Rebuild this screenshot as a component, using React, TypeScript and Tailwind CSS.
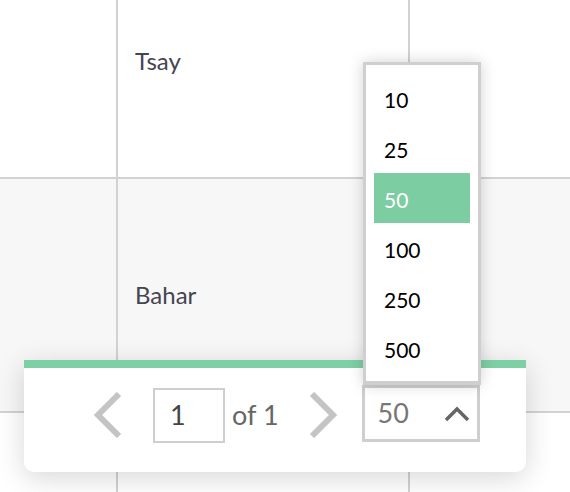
const rows = [
  { name: "Tsay", bg: "bg-white" },
  { name: "Bahar", bg: "bg-[#f7f7f7]" },
  { name: "", bg: "bg-white" },
];

const options = ["10", "25", "50", "100", "250", "500"];

const Chevron = ({ dir }: { dir: "left" | "right" }) => (
  <svg width="30" height="46" viewBox="0 0 30 46" className="block">
    <polyline
      points={dir === "left" ? "26,2 5,23 26,44" : "4,2 25,23 4,44"}
      fill="none"
      stroke="#c4c4c4"
      strokeWidth="6"
    />
  </svg>
);

const App = (): JSX.Element => {
  return (
    <div className="relative w-[570px] h-[492px] overflow-hidden bg-white font-['Lato','Liberation_Sans',sans-serif]">
      {/* table rows */}
      <div className="-mt-[55px] flex flex-col">
        {rows.map((r, i) => (
          <div key={i} className={`flex h-[234px] border-b-2 border-[#d2d2d2] ${r.bg}`}>
            <div className="w-[118px] border-r-2 border-[#d2d2d2]"></div>
            <div className="w-[292px] border-r-2 border-[#d2d2d2] flex items-center pl-[17px] text-[24px] text-[#45454f]">
              {r.name}
            </div>
            <div className="flex-1"></div>
          </div>
        ))}
      </div>

      {/* pagination panel */}
      <div className="absolute left-[24px] top-[360px] w-[502px] h-[112px] bg-white rounded-b-[10px] border-t-8 border-[#7dcfa4] shadow-[0_6px_28px_rgba(0,0,0,0.16)]">
        <div className="flex items-start pl-[69px]">
          <div className="mt-[24px]">
            <Chevron dir="left" />
          </div>
          <div className="ml-[30px] mt-[20px] w-[72px] h-[55px] border-2 border-[#cfcfcf] flex items-center pl-[15px] text-[27px] text-[#444]">
            1
          </div>
          <div className="ml-[7px] mt-[20px] h-[55px] flex items-center text-[27px] text-[#666]">of 1</div>
          <div className="ml-[29px] mt-[24px]">
            <Chevron dir="right" />
          </div>
          <div className="ml-[24px] mt-[17px] w-[118px] h-[57px] border-[3px] border-[#cfcfcf] bg-white flex items-center justify-between pl-[13px] pr-[7px] text-[27px] text-[#777]">
            <span>50</span>
            <svg width="26" height="18" viewBox="0 0 26 18">
              <polyline points="2,15 13,4 24,15" fill="none" stroke="#666" strokeWidth="3.5" />
            </svg>
          </div>
        </div>
      </div>

      {/* dropdown menu */}
      <div className="absolute left-[363px] top-[62px] w-[118px] border-[3px] border-b-[4px] border-[#cfcfcf] bg-white px-[8px] py-[8px] shadow-[0_0_14px_rgba(0,0,0,0.18)]">
        {options.map((o) => (
          <div
            key={o}
            className={`h-[50px] flex items-center pl-[10px] pt-[3px] text-[21px] ${
              o === "50" ? "bg-[#7dcda3] text-white" : "text-black"
            }`}
          >
            {o}
          </div>
        ))}
      </div>
    </div>
  );
};

export default App;
